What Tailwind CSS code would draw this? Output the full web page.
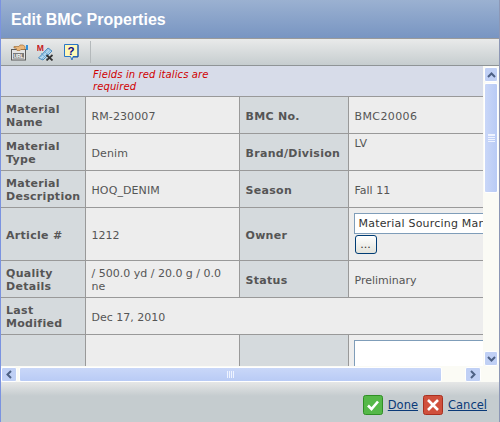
<!DOCTYPE html>
<html lang="en">
  <head>
    <meta charset="UTF-8" />
    <title>Edit BMC Properties</title>
    <script src="https://cdn.jsdelivr.net/npm/@tailwindcss/browser@4"></script>
  </head>
  <body class="bg-[#c5cccf] overflow-hidden">
    <div class="w-[500px] h-[422px] flex flex-col border-l border-l-[#7b93e0] border-r border-r-[#8d97b5] overflow-hidden font-['DejaVu_Sans',sans-serif] text-[11px]">
      <!-- Title -->
      <div class="h-[39px] shrink-0 flex items-center pl-[10px] pt-[1px] bg-gradient-to-b from-[#9bb1d1] to-[#7895c2] border-b border-[#9a9a9a] text-white font-bold text-[16px] font-['Liberation_Sans',sans-serif]">Edit BMC Properties</div>
      <!-- Toolbar -->
      <div class="h-[27px] shrink-0 flex items-center bg-gradient-to-b from-[#e9eaea] to-[#c6cdcf] border-b border-[#8f9496]">
        <div class="flex items-center pl-[10px] pr-[11px] h-[22px] border-r border-[#b4b9bb]">
          <!-- url icon -->
          <svg width="17" height="17" viewBox="0 0 17 17" class="mr-[9px]"><rect x=".5" y="5.500" width="14" height="10.500" fill="#e4e4e4" stroke="#5a5a5a"/><rect x="2" y="9" width="11" height="5.500" fill="#7a7a7a"/><text x="2.400" y="13.700" font-size="5" font-weight="700" fill="#fff" font-family="Liberation Sans">URL</text><path d="M3 2.500h5l1-1.500h3l2 1.500v3h-4l-1 1H6L5 4H3z" fill="#e9b77c" stroke="#a5713a" stroke-width=".7"/><rect x="15" y="1" width="2" height="5" fill="#2f8fd8"/></svg>
          <!-- mail-off icon -->
          <svg width="17" height="17" viewBox="0 0 17 17" class="mr-[10px]"><path d="M1.500 14L11 4l4 3-9 9z" fill="#b5d8f0" stroke="#3f84ba" stroke-width=".9"/><path d="M4 9l6 6M6.500 6.500l6 6M3.500 13l9-9M5 15l8.500-9" stroke="#5b9ccc" stroke-width=".6"/><text x="-.2" y="7" font-size="8.500" font-weight="700" fill="#c62020" font-family="Liberation Sans">M</text><path d="M9.500 11l6 5.500M15.500 11l-6 5.500" stroke="#333" stroke-width="1.700"/></svg>
          <!-- help icon -->
          <svg width="15" height="17" viewBox="0 0 15 17"><path d="M.5.500h13.500v12h-5l-1 3.500-1.500-3.500H.5z" fill="#fff8b8" stroke="#2a76c8"/><path d="M14 1v12H9" fill="none" stroke="#1a4fa0"/><text x="3.500" y="11" font-size="11.500" font-weight="700" fill="#0c0c88" font-family="Liberation Sans">?</text></svg>
        </div>
      </div>
      <!-- Scroll region -->
      <div class="h-[300px] shrink-0 flex">
        <div class="w-[482px] shrink-0 overflow-hidden bg-[#ededed]">
          <table class="table-fixed border-collapse w-[600px] text-[#555] leading-[13px]">
            <colgroup>
              <col class="w-[84px]" />
              <col class="w-[154px]" />
              <col class="w-[109px]" />
              <col class="w-[253px]" />
            </colgroup>
            <tbody>
              <tr class="h-[30px] bg-[#d7dce9] border-b border-[#999]">
                <td></td>
                <td colspan="3" class="pl-[8px] pt-[1px] text-[10px] tracking-[0.1px] italic text-[#d00000] leading-[12px]">
                  <div class="w-[125px]">Fields in red italics are required</div>
                </td>
              </tr>
              <tr class="h-[37px] border-b border-[#999]">
                <td class="pl-[5px] pt-[2px] font-bold tracking-[0.3px] bg-[#d5dadd] border-r border-[#999]">Material Name</td>
                <td class="pl-[6px] pt-[4px] tracking-[0.1px] border-r border-[#999]">RM-230007</td>
                <td class="pl-[6px] pt-[4px] font-bold tracking-[0.3px] bg-[#d5dadd] border-r border-[#999]">BMC No.</td>
                <td class="pl-[6px] pt-[4px] tracking-[0.4px]">BMC20006</td>
              </tr>
              <tr class="h-[37px] border-b border-[#999]">
                <td class="pl-[5px] pt-[2px] font-bold tracking-[0.3px] bg-[#d5dadd] border-r border-[#999]">Material Type</td>
                <td class="pl-[6px] pt-[4px] tracking-[0.1px] border-r border-[#999]">Denim</td>
                <td class="pl-[6px] pt-[4px] font-bold tracking-[0.3px] bg-[#d5dadd] border-r border-[#999]">Brand/Division</td>
                <td class="pl-[6px] pt-[3px] align-top">LV</td>
              </tr>
              <tr class="h-[37px] border-b border-[#999]">
                <td class="pl-[5px] pt-[2px] font-bold tracking-[0.3px] bg-[#d5dadd] border-r border-[#999]">Material Description</td>
                <td class="pl-[6px] pt-[4px] tracking-[0.1px] border-r border-[#999]">HOQ_DENIM</td>
                <td class="pl-[6px] pt-[4px] font-bold tracking-[0.3px] bg-[#d5dadd] border-r border-[#999]">Season</td>
                <td class="pl-[6px] pt-[4px]">Fall 11</td>
              </tr>
              <tr class="h-[53px] border-b border-[#999]">
                <td class="pl-[5px] pt-[4px] font-bold tracking-[0.3px] bg-[#d5dadd] border-r border-[#999]">Article #</td>
                <td class="pl-[6px] pt-[4px] border-r border-[#999]">1212</td>
                <td class="pl-[6px] pt-[4px] font-bold tracking-[0.3px] bg-[#d5dadd] border-r border-[#999]">Owner</td>
                <td class="pl-[5px] align-top pt-[5px]">
                  <div class="w-[240px] h-[21px] pl-[4px] flex items-center whitespace-nowrap overflow-hidden tracking-[0.2px] bg-white border border-[#7f9db9] text-[#333]">Material Sourcing Manager</div>
                  <button class="block mt-[1px] ml-[1px] w-[22px] h-[19px] rounded-[3px] border border-[#003c74] bg-gradient-to-b from-white to-[#e3e3db] text-[#333] leading-[15px]">...</button>
                </td>
              </tr>
              <tr class="h-[37px] border-b border-[#999]">
                <td class="pl-[5px] pt-[2px] font-bold tracking-[0.3px] bg-[#d5dadd] border-r border-[#999]">Quality Details</td>
                <td class="pl-[6px] pr-[6px] pt-[2px] border-r border-[#999]">/ 500.0 yd / 20.0 g / 0.0 ne</td>
                <td class="pl-[6px] pt-[4px] font-bold tracking-[0.3px] bg-[#d5dadd] border-r border-[#999]">Status</td>
                <td class="pl-[6px] pt-[4px]">Preliminary</td>
              </tr>
              <tr class="h-[37px] border-b border-[#999]">
                <td class="pl-[5px] pt-[2px] font-bold tracking-[0.3px] bg-[#d5dadd] border-r border-[#999]">Last Modified</td>
                <td colspan="3" class="pl-[6px] pt-[4px]">Dec 17, 2010</td>
              </tr>
              <tr class="h-[60px]">
                <td class="bg-[#d5dadd] border-r border-[#999]"></td>
                <td class="border-r border-[#999]"></td>
                <td class="bg-[#d5dadd] border-r border-[#999]"></td>
                <td class="pl-[5px] pt-[5px] align-top">
                  <div class="w-[240px] h-[50px] bg-white border border-[#7f9db9]"></div>
                </td>
              </tr>
            </tbody>
          </table>
        </div>
        <!-- Vertical scrollbar -->
        <div class="w-[16px] shrink-0 flex flex-col bg-[#fbfbf5] pt-[1px]">
          <button class="h-[15px] mx-[1px] flex items-center justify-center rounded-[2px] border border-white bg-[#c0d0f5]">
            <svg width="9" height="6" viewBox="0 0 9 6"><path d="M1 5l3.500-3.500L8 5" fill="none" stroke="#4d6185" stroke-width="2"/></svg>
          </button>
          <div class="h-[110px] mx-[1px] mt-[1px] flex items-center justify-center rounded-[2px] border border-white bg-gradient-to-r from-[#c9d7f8] to-[#b9cbf5]">
            <div class="w-[7px] h-[8px] border-y border-[#eef3ff] bg-[repeating-linear-gradient(#eef3ff_0,#eef3ff_1px,transparent_1px,transparent_2px)]"></div>
          </div>
          <div class="flex-1"></div>
          <button class="h-[15px] mx-[1px] flex items-center justify-center rounded-[2px] border border-white bg-[#c0d0f5]">
            <svg width="9" height="6" viewBox="0 0 9 6"><path d="M1 1l3.500 3.500L8 1" fill="none" stroke="#4d6185" stroke-width="2"/></svg>
          </button>
        </div>
      </div>
      <!-- Horizontal scrollbar -->
      <div class="h-[16px] shrink-0 flex bg-[#fbfbf5] pt-[1px]">
        <button class="w-[16px] h-[15px] flex items-center justify-center rounded-[2px] border border-white bg-[#c0d0f5]">
          <svg width="6" height="9" viewBox="0 0 6 9"><path d="M5 1L1.500 4.500L5 8" fill="none" stroke="#4d6185" stroke-width="2"/></svg>
        </button>
        <div class="w-[423px] ml-[2px] flex items-center justify-center rounded-[2px] border border-white bg-gradient-to-b from-[#c9d7f8] to-[#b9cbf5]">
          <div class="w-[8px] h-[7px] bg-[repeating-linear-gradient(90deg,#eef3ff_0,#eef3ff_1px,transparent_1px,transparent_2px)]"></div>
        </div>
        <div class="flex-1"></div>
        <button class="w-[16px] h-[15px] mr-[18px] flex items-center justify-center rounded-[2px] border border-white bg-[#c0d0f5]">
          <svg width="6" height="9" viewBox="0 0 6 9"><path d="M1 1l3.500 3.500L1 8" fill="none" stroke="#4d6185" stroke-width="2"/></svg>
        </button>
      </div>
      <!-- Footer -->
      <div class="flex-1 flex items-start justify-end pt-[13px] pr-[12px] bg-gradient-to-b from-[#e6e7e7] to-[#c5cccf] to-[35%] text-[11.5px]">
        <svg width="20" height="20" viewBox="0 0 20 20" class="mr-[5px]"><rect x=".5" y=".5" width="19" height="19" rx="2" fill="#55b848" stroke="#2f8f25"/><path d="M5 10.500l3.500 3.500L15 6.500" fill="none" stroke="#fff" stroke-width="2.600"/></svg>
        <a href="#" class="mr-[5px] mt-[2px] underline text-[#0a3a78]">Done</a>
        <svg width="20" height="20" viewBox="0 0 20 20" class="mr-[5px]"><rect x=".5" y=".5" width="19" height="19" rx="2" fill="#d0503c" stroke="#a83020"/><path d="M5 5l10 10M15 5L5 15" stroke="#fff" stroke-width="2.600"/></svg>
        <a href="#" class="mt-[2px] underline text-[#0a3a78]">Cancel</a>
      </div>
    </div>
  </body>
</html>
